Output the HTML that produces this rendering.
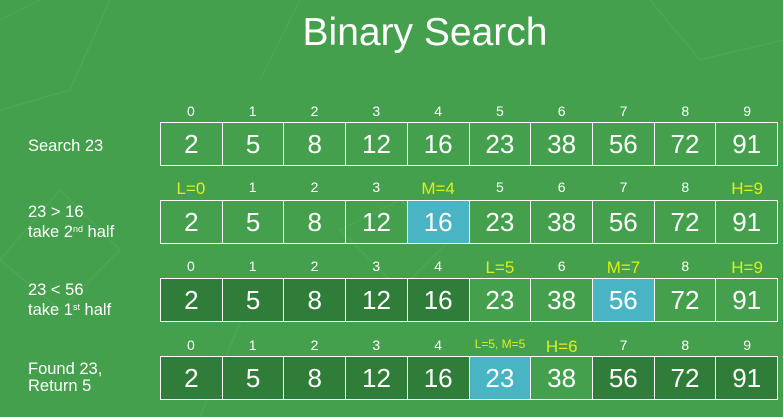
<!DOCTYPE html><html><head><style>
body{margin:0;width:783px;height:417px;overflow:hidden;background:#44a04c;font-family:"Liberation Sans",sans-serif;color:#fff;position:relative}
.t{position:absolute;left:0;width:850px;text-align:center;top:11px;font-size:39px}
.row{position:absolute;left:160px;width:618px;height:44px;display:flex;border:1.5px solid #fff;box-sizing:border-box}
.c{flex:1;border-right:1.5px solid #fff;text-align:center;line-height:43px;font-size:26px}
.c:last-child{border-right:0}
.d{background:#2f7d39}.b{background:#48b4c4}
.ix{position:absolute;width:61.8px;text-align:center;font-size:14px}
.y{color:#dcef1a;font-size:17px}
.lab{position:absolute;left:28px;font-size:16.5px;line-height:17px}
sup{font-size:9px;vertical-align:5px}
</style></head><body>
<svg width="783" height="417" style="position:absolute;left:0;top:0" fill="none" stroke="#4ea855" stroke-width="1.2">
<path d="M0 20 L40 0 M110 0 L70 90 L0 110 M0 260 L60 310 L120 250 L60 190 Z M340 230 L400 200 L450 240 L400 290 Z M650 0 L700 60 L783 40 M250 300 L200 417 M300 0 L260 80"/>
</svg>
<div class="t">Binary Search</div>
<div class="lab" style="top:138px">Search 23</div>
<div class="lab" style="top:204px">23 &gt; 16<br>take 2<sup>nd</sup> half</div>
<div class="lab" style="top:282px">23 &lt; 56<br>take 1<sup>st</sup> half</div>
<div class="lab" style="top:361px">Found 23,<br>Return 5</div>

<div class="row" style="top:122px"><div class="c">2</div><div class="c">5</div><div class="c">8</div><div class="c">12</div><div class="c">16</div><div class="c">23</div><div class="c">38</div><div class="c">56</div><div class="c">72</div><div class="c">91</div></div>
<div class="row" style="top:200px"><div class="c">2</div><div class="c">5</div><div class="c">8</div><div class="c">12</div><div class="c b">16</div><div class="c">23</div><div class="c">38</div><div class="c">56</div><div class="c">72</div><div class="c">91</div></div>
<div class="row" style="top:278px"><div class="c d">2</div><div class="c d">5</div><div class="c d">8</div><div class="c d">12</div><div class="c d">16</div><div class="c">23</div><div class="c">38</div><div class="c b">56</div><div class="c">72</div><div class="c">91</div></div>
<div class="row" style="top:356px"><div class="c d">2</div><div class="c d">5</div><div class="c d">8</div><div class="c d">12</div><div class="c d">16</div><div class="c b">23</div><div class="c">38</div><div class="c d">56</div><div class="c d">72</div><div class="c d">91</div></div>

<div style="position:absolute;left:160px;top:103px"><span class="ix" style="left:0">0</span><span class="ix" style="left:61.8px">1</span><span class="ix" style="left:123.6px">2</span><span class="ix" style="left:185.4px">3</span><span class="ix" style="left:247.2px">4</span><span class="ix" style="left:309px">5</span><span class="ix" style="left:370.8px">6</span><span class="ix" style="left:432.6px">7</span><span class="ix" style="left:494.4px">8</span><span class="ix" style="left:556.2px">9</span></div>
<div style="position:absolute;left:160px;top:179px"><span class="ix y" style="left:0">L=0</span><span class="ix" style="left:61.8px">1</span><span class="ix" style="left:123.6px">2</span><span class="ix" style="left:185.4px">3</span><span class="ix y" style="left:247.2px">M=4</span><span class="ix" style="left:309px">5</span><span class="ix" style="left:370.8px">6</span><span class="ix" style="left:432.6px">7</span><span class="ix" style="left:494.4px">8</span><span class="ix y" style="left:556.2px">H=9</span></div>
<div style="position:absolute;left:160px;top:258px"><span class="ix" style="left:0">0</span><span class="ix" style="left:61.8px">1</span><span class="ix" style="left:123.6px">2</span><span class="ix" style="left:185.4px">3</span><span class="ix" style="left:247.2px">4</span><span class="ix y" style="left:309px">L=5</span><span class="ix" style="left:370.8px">6</span><span class="ix y" style="left:432.6px">M=7</span><span class="ix" style="left:494.4px">8</span><span class="ix y" style="left:556.2px">H=9</span></div>
<div style="position:absolute;left:160px;top:337px"><span class="ix" style="left:0">0</span><span class="ix" style="left:61.8px">1</span><span class="ix" style="left:123.6px">2</span><span class="ix" style="left:185.4px">3</span><span class="ix" style="left:247.2px">4</span><span class="ix y" style="left:302px;width:76px;font-size:12px">L=5, M=5</span><span class="ix y" style="left:370.8px">H=6</span><span class="ix" style="left:432.6px">7</span><span class="ix" style="left:494.4px">8</span><span class="ix" style="left:556.2px">9</span></div>
</body></html>
